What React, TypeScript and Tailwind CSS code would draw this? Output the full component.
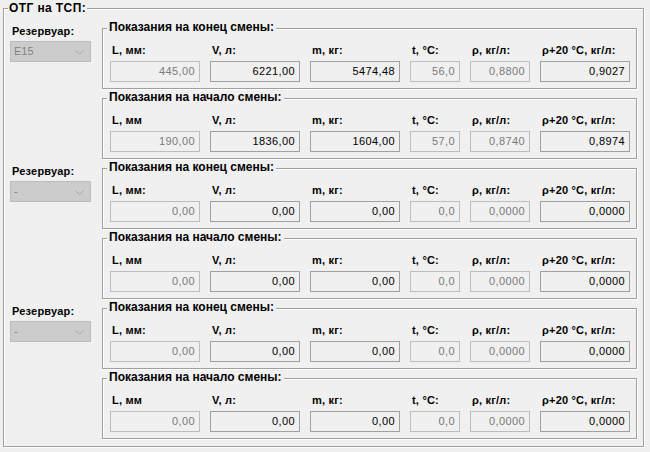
type Col = { end: string; start: string; w: string; on: boolean };

const cols: Col[] = [
  { end: "L, мм:", start: "L, мм", w: "w-[90px]", on: false },
  { end: "V, л:", start: "V, л:", w: "w-[90px]", on: true },
  { end: "m, кг:", start: "m, кг:", w: "w-[90px]", on: true },
  { end: "t, °C:", start: "t, °C:", w: "w-[50px]", on: false },
  { end: "ρ, кг/л:", start: "ρ, кг/л:", w: "w-[60px]", on: false },
  { end: "ρ+20 °C, кг/л:", start: "ρ+20 °C, кг/л:", w: "w-[90px]", on: true },
];

const empty = ["0,00", "0,00", "0,00", "0,0", "0,0000", "0,0000"];

const tanks = [
  {
    name: "E15",
    end: ["445,00", "6221,00", "5474,48", "56,0", "0,8800", "0,9027"],
    start: ["190,00", "1836,00", "1604,00", "57,0", "0,8740", "0,8974"],
  },
  { name: "-", end: empty, start: empty },
  { name: "-", end: empty, start: empty },
];

const Readings = ({ title, kind, values }: { title: string; kind: "end" | "start"; values: string[] }) => (
  <div className="relative h-[61px] w-[535px] border border-[#a0a0a0] shadow-[inset_1px_1px_0_#fff,1px_1px_0_#fff] pl-[7px] pt-[15px]">
    <span className="absolute left-[4px] top-[-8px] bg-[#f0f0f0] px-[2px] text-[12px] font-bold leading-[13px]">{title}</span>
    <div className="flex gap-[10px]">
      {cols.map((c, i) => (
        <div key={i} className={`flex flex-col ${c.w}`}>
          <div className="h-[13px] pl-[2px] font-bold leading-[13px] tracking-[0.2px] whitespace-nowrap">
            {kind === "end" ? c.end : c.start}
          </div>
          <div
            className={`mt-[4px] flex h-[21px] items-center justify-end border pr-[4px] leading-[13px] tracking-[0.4px] ${
              c.on ? "border-[#a0a0a0] text-black" : "border-[#bdbdbd] text-[#7a7a7a]"
            }`}
          >
            {values[i]}
          </div>
        </div>
      ))}
    </div>
  </div>
);

export default function App() {
  return (
    <div className="h-[452px] w-[650px] bg-[#f0f0f0] pl-[3px] pt-[8px] font-['Liberation_Sans',Arial,sans-serif] text-[11px] text-black">
      <div className="relative h-[439px] w-[641px] border border-[#a0a0a0] shadow-[inset_1px_1px_0_#fff,1px_1px_0_#fff]">
        <span className="absolute left-[4px] top-[-7px] bg-[#f0f0f0] px-[1px] text-[12px] font-bold leading-[13px] tracking-[0.4px]">
          ОТГ на ТСП:
        </span>
        <div className="flex flex-col gap-[9px] pt-[19px]">
          {tanks.map((t, i) => (
            <div key={i} className="flex">
              <div className="-mt-[3px] flex w-[98px] flex-col">
                <div className="h-[13px] pl-[8px] font-bold leading-[13px] tracking-[0.2px]">Резервуар:</div>
                <div className="ml-[6px] mt-[3px] flex h-[21px] w-[81px] items-center justify-between border border-[#bcbcbc] bg-[#cccccc] pl-[3px] pr-[6px] text-[#838383]">
                  <span>{t.name}</span>
                  {/* combo arrow */}
                  <svg width="9" height="5" viewBox="0 0 9 5" className="mt-[1px]">
                    <polyline points="0.5,0.5 4.5,4.5 8.5,0.5" fill="none" stroke="#a8a8a8" strokeWidth="1" />
                  </svg>
                </div>
              </div>
              <div className="flex flex-col gap-[9px]">
                <Readings title="Показания на конец смены:" kind="end" values={t.end} />
                <Readings title="Показания на начало смены:" kind="start" values={t.start} />
              </div>
            </div>
          ))}
        </div>
      </div>
    </div>
  );
}
